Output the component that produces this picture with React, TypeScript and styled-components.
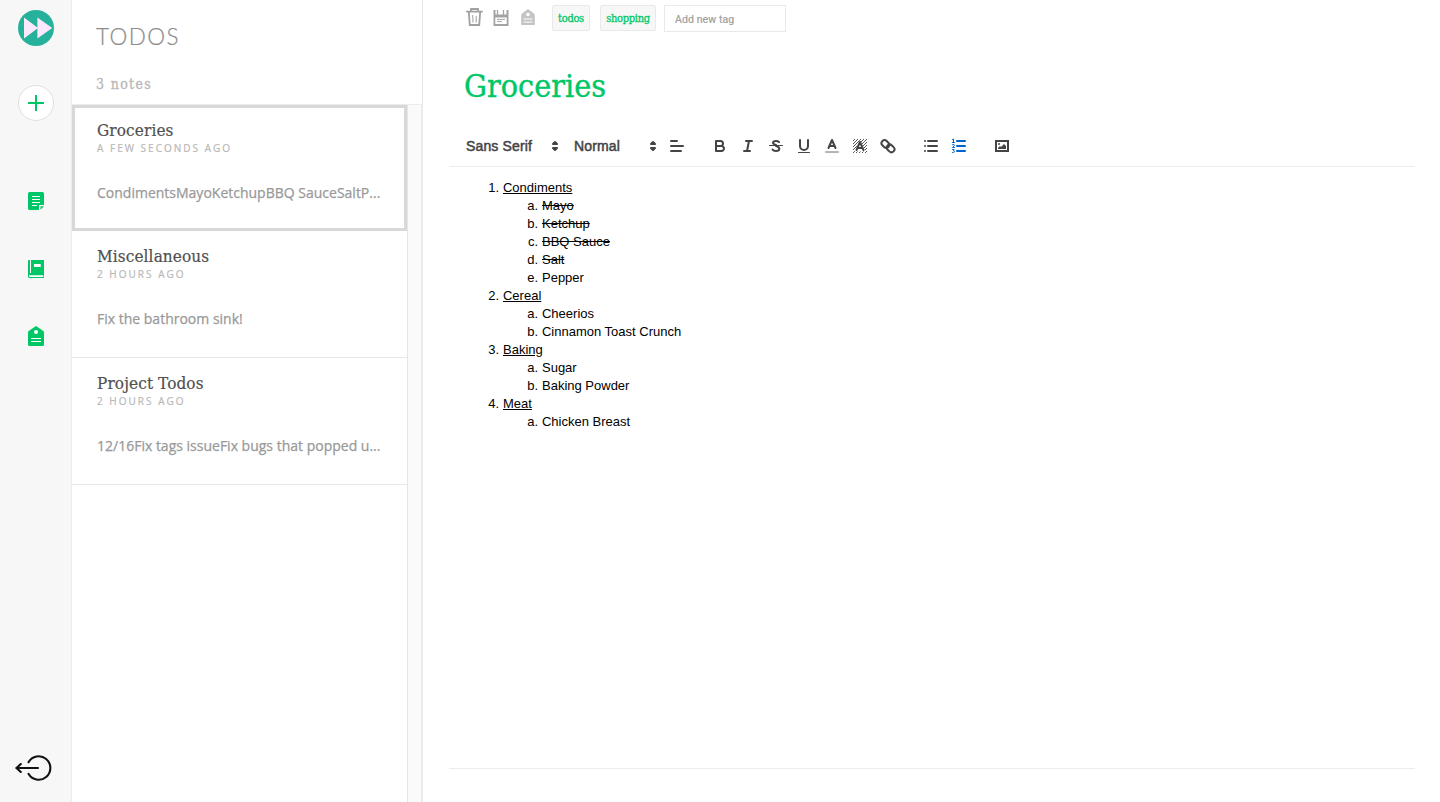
import React from "react";
import styled, { createGlobalStyle } from "styled-components";

const GREEN = "#00c766";
const SLAB = '"DejaVu Serif Condensed", "DejaVu Serif", serif';
const SANS = '"Liberation Sans", Arial, sans-serif';

const GlobalStyle = createGlobalStyle`
  *, *::before, *::after { box-sizing: border-box; }
  body { margin: 0; background: #fff; font-family: ${SANS}; }
  button { border: 0; padding: 0; background: none; }
`;

const Page = styled.div`
  display: flex;
  height: 802px;
  overflow: hidden;
`;

const Sidebar = styled.nav`
  flex: 0 0 72px;
  display: flex;
  flex-direction: column;
  align-items: center;
  padding: 10px 0 18px;
  background: #f7f7f7;
  border-right: 1px solid #ebebeb;
`;

const Logo = styled.svg`
  display: block;
  width: 36px;
  height: 36px;
  flex: none;
`;

const AddButton = styled.button`
  width: 36px;
  height: 36px;
  flex: none;
  margin: 39px 0 68px;
  display: flex;
  align-items: center;
  justify-content: center;
  border: 1px solid #e0e0e0;
  border-radius: 50%;
  background: #fff;
`;

const NavButton = styled.button`
  width: 24px;
  height: 24px;
  flex: none;
  margin-bottom: 44px;
  svg { display: block; }
`;

const LogoutButton = styled.button`
  margin-top: auto;
  width: 40px;
  height: 32px;
  margin-right: 5px;
  svg { display: block; }
`;

const NotesPanel = styled.section`
  flex: 0 0 351px;
  display: flex;
  flex-direction: column;
  border-right: 1px solid #e8e8e8;
`;

const PanelHeader = styled.header`
  height: 105px;
  flex: none;
  padding: 22px 24px 0;
  border-bottom: 1px solid #ececec;
`;

const PanelTitle = styled.h1`
  margin: 0;
  font: 300 22.5px/30px Lato, sans-serif;
  -webkit-text-stroke: 0.2px #8c8c8c;
  letter-spacing: 1.4px;
  color: #8c8c8c;
`;

const NoteCount = styled.div`
  margin-top: 22px;
  font: 400 14px/20px ${SLAB};
  -webkit-text-stroke: 0.3px #b8b8b8;
  letter-spacing: 1.35px;
  color: #b8b8b8;
`;

const PanelBody = styled.div`
  flex: 1;
  display: flex;
  background: #fafafa;
  border-right: 1px solid #ececec;
`;

const NoteList = styled.div`
  width: 336px;
  background: #fff;
  border-right: 1px solid #e6e6e6;
`;

const NoteCard = styled.article<{ $selected?: boolean }>`
  height: ${(p) => (p.$selected ? 126 : 127)}px;
  padding: ${(p) => (p.$selected ? "12px 22px 0" : "15px 25px 0")};
  border: 0 solid #e8e8e8;
  ${(p) => (p.$selected ? "border: 3px solid #d8d8d8;" : "border-bottom-width: 1px;")}
`;

const NoteTitle = styled.h2`
  margin: 0;
  font: 400 17px/20px ${SLAB};
  -webkit-text-stroke: 0.2px #505050;
  letter-spacing: 0.12px;
  color: #505050;
`;

const NoteTime = styled.div`
  font: 400 10px/16px "Open Sans", sans-serif;
  -webkit-text-stroke: 0.2px #b8b8b8;
  letter-spacing: 2.02px;
  text-transform: uppercase;
  color: #b8b8b8;
`;

const NotePreview = styled.p`
  margin: 27px 0 0;
  font: 400 14px/20px "Open Sans", sans-serif;
  -webkit-text-stroke: 0.25px #999;
  color: #999;
  white-space: nowrap;
`;

const Main = styled.main`
  flex: 1;
  display: flex;
  flex-direction: column;
  padding: 5px 25px 33px 26px;
`;

const TopBar = styled.div`
  display: flex;
  align-items: flex-start;
  height: 27px;
  padding-left: 15px;
`;

const Actions = styled.div`
  display: flex;
  margin-right: 7px;
`;

const Action = styled.button`
  width: 20px;
  height: 26px;
  margin-right: 7px;
  svg { display: block; }
`;

const Tag = styled.span<{ $width: number }>`
  width: ${(p) => p.$width}px;
  height: 26px;
  margin-right: 10px;
  border: 1px solid #e9e9e9;
  border-radius: 2px;
  background: #f7f7f7;
  font: 400 11px/26px ${SLAB};
  letter-spacing: -0.3px;
  -webkit-text-stroke: 0.3px ${GREEN};
  text-align: center;
  color: ${GREEN};
`;

const TagInput = styled.input`
  width: 122px;
  height: 27px;
  margin-left: -2px;
  padding: 1px 10px 0;
  border: 1px solid #e9e9e9;
  outline: none;
  font: 400 10.5px Roboto, sans-serif;
  letter-spacing: 0.1px;
  &::placeholder {
    color: #a0a0a0;
    opacity: 1;
    -webkit-text-stroke: 0.2px #a0a0a0;
  }
`;

const Title = styled.h1`
  margin: 32px 0 0 15px;
  height: 62px;
  font: 400 32px/44px ${SLAB};
  -webkit-text-stroke: 0.4px ${GREEN};
  color: ${GREEN};
`;

const Toolbar = styled.div`
  display: flex;
  height: 41px;
  flex: none;
  padding: 8px;
  border-bottom: 1px solid #ececec;
`;

const ToolGroup = styled.div`
  display: flex;
  margin-right: 15px;
`;

const ToolButton = styled.button<{ $active?: boolean }>`
  width: 28px;
  height: 24px;
  padding: 3px 5px;
  color: ${(p) => (p.$active ? "#06c" : "#444")};
  svg { display: block; width: 18px; height: 18px; }
`;

const Picker = styled.div<{ $width: number }>`
  width: ${(p) => p.$width}px;
  height: 24px;
  display: flex;
  align-items: center;
  justify-content: space-between;
  padding: 0 1px 0 9px;
  font: 400 14px/24px ${SANS};
  -webkit-text-stroke: 0.5px #444;
  letter-spacing: 0.15px;
  color: #444;
  svg { width: 18px; height: 18px; }
`;

const Editor = styled.div`
  flex: 1;
  padding: 12px 15px;
  border-bottom: 1px solid #ececec;
  font: 400 13px/18px ${SANS};
  color: #000;
`;

const Outline = styled.ol`
  margin: 0;
  padding-left: 39px;
  list-style: none;
`;

const Marker = styled.span`
  display: inline-block;
  width: 15.6px;
  margin: 0 3.9px 0 -19.5px;
  text-align: right;
  white-space: nowrap;
`;

const Entry = styled.span<{ $line?: "underline" | "line-through" }>`
  text-decoration: ${(p) => p.$line ?? "none"};
`;

const notes = [
  { title: "Groceries", time: "a few seconds ago", text: "CondimentsMayoKetchupBBQ SauceSaltP...", selected: true },
  { title: "Miscellaneous", time: "2 hours ago", text: "Fix the bathroom sink!" },
  { title: "Project Todos", time: "2 hours ago", text: "12/16Fix tags issueFix bugs that popped u..." },
];

const groceries = [
  { name: "Condiments", items: ["Mayo", "Ketchup", "BBQ Sauce", "Salt", "Pepper"], done: 4 },
  { name: "Cereal", items: ["Cheerios", "Cinnamon Toast Crunch"], done: 0 },
  { name: "Baking", items: ["Sugar", "Baking Powder"], done: 0 },
  { name: "Meat", items: ["Chicken Breast"], done: 0 },
];

const ToolIcon = ({ children }: { children: React.ReactNode }) => (
  <svg viewBox="0 0 18 18" fill="none" stroke="currentColor" strokeWidth="2" strokeLinecap="round" strokeLinejoin="round">
    {children}
  </svg>
);

const Arrows = () => (
  <ToolIcon>
    <path d="M7 11 9 13 11 11Z M7 7 9 5 11 7Z" fill="currentColor" />
  </ToolIcon>
);

const Hatching = () => (
  <>
    <defs>
      <pattern id="hatch" width="3" height="3" patternUnits="userSpaceOnUse">
        <path d="M0 3 3 0M-1 1 1-1M2 4 4 2" stroke="currentColor" strokeWidth="0.9" />
      </pattern>
    </defs>
    <path d="M2 2H16V16H2ZM9 3 3.6 14.5H14.4Z" fill="url(#hatch)" fillRule="evenodd" stroke="none" />
  </>
);

export default function App() {
  return (
    <Page>
      <GlobalStyle />
      <Sidebar>
        <Logo viewBox="0 0 36 36">
          <circle cx="18" cy="18" r="18" fill="#26b29a" />
          <path d="M6 7.6 20 17.9 6 28.4ZM19.4 7.6 34.2 17.9 19.4 28.4Z" fill="#fce8fc" />
        </Logo>
        <AddButton aria-label="New note">
          <svg width="16" height="16" viewBox="0 0 16 16" stroke={GREEN} strokeWidth="2">
            <path d="M8 0V16M0 8H16" />
          </svg>
        </AddButton>
        <NavButton aria-label="Notes">
          <svg width="24" height="24" viewBox="0 0 24 24">
            <path d="M5.5 3H18.5Q20 3 20 4.5V16H15V21H5.5Q4 21 4 19.5V4.5Q4 3 5.5 3Z" fill={GREEN} />
            <path d="M16.5 17.3H20L16.5 20.8Z" fill={GREEN} />
            <path d="M8 7.5H16M8 10.5H16M8 13.5H16M8 16.5H13" stroke="#fff" />
          </svg>
        </NavButton>
        <NavButton aria-label="Notebooks">
          <svg width="24" height="24" viewBox="0 0 24 24">
            <path d="M5 3H20V21H5.5Q4 21 4 19.5V4Q4 3 5 3Z" fill={GREEN} />
            <path d="M6.5 3V16" stroke="#fff" />
            <path d="M10 7H16.7V10H10ZM5 18.3H19.3V20H5.5Q4.5 19 5 18.3Z" fill="#fff" />
          </svg>
        </NavButton>
        <NavButton aria-label="Tags">
          <svg width="24" height="24" viewBox="0 0 24 24">
            <path d="M12 1 19 5.7Q20 6.5 20 7.5V19.5Q20 21 18.5 21H5.5Q4 21 4 19.5V7.5Q4 6.5 5 5.7Z" fill={GREEN} />
            <circle cx="12" cy="7" r="2" fill="#fff" />
            <path d="M7 13.5H17M7 16.5H17" stroke="#fff" />
          </svg>
        </NavButton>
        <LogoutButton aria-label="Log out">
          <svg width="40" height="32" viewBox="0 0 40 32" fill="none" stroke="#111" strokeWidth="2.1" strokeLinecap="round">
            <path d="M15.5 10.2A11.7 11.7 0 1 1 15.5 21.8M25 16H3.5M7.8 12 3.5 16 7.8 20" />
          </svg>
        </LogoutButton>
      </Sidebar>

      <NotesPanel>
        <PanelHeader>
          <PanelTitle>TODOS</PanelTitle>
          <NoteCount>3 notes</NoteCount>
        </PanelHeader>
        <PanelBody>
          <NoteList>
            {notes.map((note) => (
              <NoteCard key={note.title} $selected={note.selected}>
                <NoteTitle>{note.title}</NoteTitle>
                <NoteTime>{note.time}</NoteTime>
                <NotePreview>{note.text}</NotePreview>
              </NoteCard>
            ))}
          </NoteList>
        </PanelBody>
      </NotesPanel>

      <Main>
        <TopBar>
          <Actions>
            <Action aria-label="Delete">
              <svg width="20" height="26" viewBox="0 0 20 26" fill="none" stroke="#a0a0a0" strokeWidth="1.8">
                <path d="M2.2 6.6H18.8M7 6.6V4H14V6.6M4.8 7 5.8 20H15.2L16.2 7" />
                <path d="M8.7 10 9 17.5M12.2 11V17.5" strokeWidth="1" />
              </svg>
            </Action>
            <Action aria-label="Save">
              <svg width="20" height="26" viewBox="0 0 20 26">
                <path d="M2.5 5H4.5V9.5H15.5V5H17.5V21H2.5ZM4.3 12.5V19H15.7V12.5Z" fill="#a3a3a3" fillRule="evenodd" />
                <path d="M6.5 5V10M12.5 5V10" stroke="#a3a3a3" strokeWidth="1.3" />
                <path d="M6 14.4H14M6 16.6H11" stroke="#a3a3a3" />
              </svg>
            </Action>
            <Action aria-label="Tags">
              <svg width="20" height="26" viewBox="0 0 20 26">
                <path d="M10 4 15.5 8.3Q16.8 9.3 16.8 10.5V20H3.2V10.5Q3.2 9.3 4.5 8.3Z" fill="#c4c4c4" />
                <circle cx="10" cy="9.5" r="1.8" fill="#fff" />
                <path d="M5.5 14H14.5M5.5 17H14.5" stroke="#fff" />
              </svg>
            </Action>
          </Actions>
          <Tag $width={38}>todos</Tag>
          <Tag $width={56}>shopping</Tag>
          <TagInput placeholder="Add new tag" />
        </TopBar>
        <Title>Groceries</Title>

        <Toolbar>
          <ToolGroup>
            <Picker $width={108}>Sans Serif<Arrows /></Picker>
            <Picker $width={98}>Normal<Arrows /></Picker>
            <ToolButton aria-label="Align">
              <ToolIcon><path d="M3 9H15M3 14H13M3 4H9" /></ToolIcon>
            </ToolButton>
          </ToolGroup>
          <ToolGroup>
            <ToolButton aria-label="Bold">
              <ToolIcon><path d="M5 4H9.5A2.5 2.5 0 0 1 12 6.5 2.5 2.5 0 0 1 9.5 9H5V4ZM5 9H10.5A2.5 2.5 0 0 1 13 11.5 2.5 2.5 0 0 1 10.5 14H5V9Z" /></ToolIcon>
            </ToolButton>
            <ToolButton aria-label="Italic">
              <ToolIcon><path d="M7 4H13M5 14H11M8 14 10 4" /></ToolIcon>
            </ToolButton>
            <ToolButton aria-label="Strike">
              <ToolIcon>
                <path d="M15.5 8.5H2.5" strokeWidth="1" />
                <path d="M9.007 8C7.7 7.5 6 7.3 6 6 6 4.6 7.5 4 9 4 10.4 4 11.3 4.4 12 5M9 9C10.8 9.5 12.3 10.1 12.3 11.7 12.3 13.3 10.8 14 9 14 7.3 14 6 13.4 5.5 12.5" />
              </ToolIcon>
            </ToolButton>
            <ToolButton aria-label="Underline">
              <ToolIcon>
                <path d="M5 3V9A4.012 4.012 0 0 0 9 13 4.012 4.012 0 0 0 13 9V3" />
                <path d="M3.5 15.5H14.5" strokeWidth="1" />
              </ToolIcon>
            </ToolButton>
            <ToolButton aria-label="Text color">
              <ToolIcon>
                <path d="M3 15H15" opacity="0.4" />
                <path d="M5.5 11 9 3 12.5 11M11.63 9H6.38" />
              </ToolIcon>
            </ToolButton>
            <ToolButton aria-label="Background color">
              <ToolIcon><Hatching /><path d="M5.5 13 9 5 12.5 13M11.63 11H6.38" /></ToolIcon>
            </ToolButton>
            <ToolButton aria-label="Link">
              <ToolIcon>
                <rect x="2.2" y="4" width="8.4" height="6" rx="3" transform="rotate(45 6.4 7)" />
                <rect x="7.4" y="8.4" width="8.4" height="6" rx="3" transform="rotate(45 11.6 11.4)" />
              </ToolIcon>
            </ToolButton>
          </ToolGroup>
          <ToolGroup>
            <ToolButton aria-label="Bulleted list">
              <ToolIcon><path d="M6 4H15M6 9H15M6 14H15M3 4H3.01M3 9H3.01M3 14H3.01" /></ToolIcon>
            </ToolButton>
            <ToolButton $active aria-label="Numbered list">
              <ToolIcon>
                <path d="M7 4H15M7 9H15M7 14H15" />
                <path d="M2.5 2.5 3.5 2V5.5M2.5 5.5H4.5M2.5 7.7Q4.5 6.9 4.5 8.1 4.4 8.9 2.5 10.5H4.5M2.5 12.5H4.2L3.5 13.8Q4.6 14 4.4 15 4 16 2.5 15.5" strokeWidth="1" />
              </ToolIcon>
            </ToolButton>
          </ToolGroup>
          <ToolGroup>
            <ToolButton aria-label="Image">
              <ToolIcon>
                <path d="M3 4H15V14H3Z" strokeLinejoin="miter" />
                <circle cx="6" cy="7" r="1" fill="currentColor" stroke="none" />
                <path d="M5 12V11L7 9 8 10 11 7 13 9V12Z" fill="currentColor" stroke="none" />
              </ToolIcon>
            </ToolButton>
          </ToolGroup>
        </Toolbar>

        <Editor>
          <Outline>
            {groceries.map((group, g) => (
              <li key={group.name}>
                <Marker>{g + 1}.</Marker>
                <Entry $line="underline">{group.name}</Entry>
                <Outline>
                  {group.items.map((item, i) => (
                    <li key={item}>
                      <Marker>{"abcde"[i]}.</Marker>
                      <Entry $line={i < group.done ? "line-through" : undefined}>{item}</Entry>
                    </li>
                  ))}
                </Outline>
              </li>
            ))}
          </Outline>
        </Editor>
      </Main>
    </Page>
  );
}
